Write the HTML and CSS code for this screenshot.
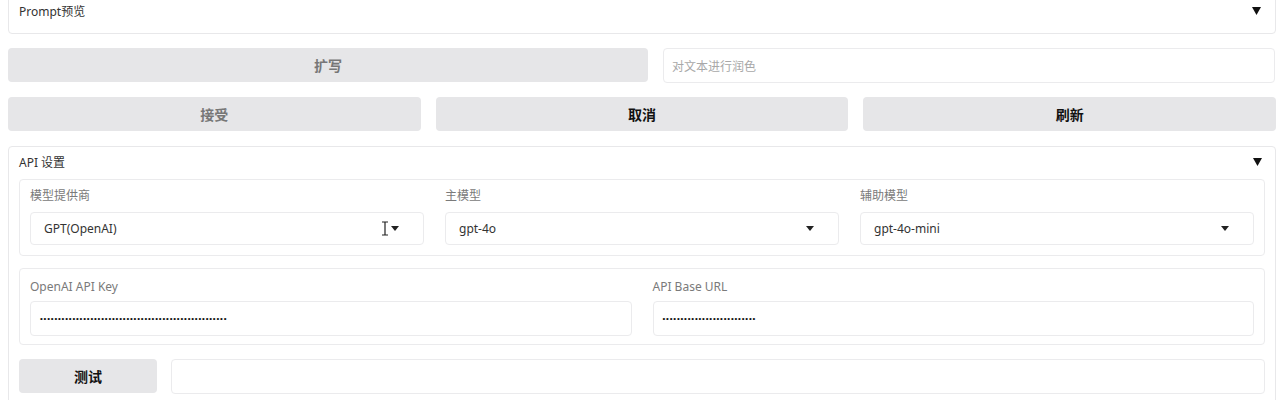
FILE: index.html
```html
<!DOCTYPE html>
<html lang="zh">
<head>
<meta charset="utf-8">
<title>Prompt</title>
<link rel="stylesheet" href="styles.css">
</head>
<body>
<div class="page">
  <div class="accordion top">
    <div class="acc-head">
      <span class="acc-title">Prompt预览</span>
      <svg class="caret" width="9" height="8" viewBox="0 0 9 8"><path d="M0 0H9L4.5 8Z" fill="#111"/></svg>
    </div>
  </div>

  <div class="row two">
    <button class="btn disabled">扩写</button>
    <div class="field"><span class="placeholder">对文本进行润色</span></div>
  </div>

  <div class="row three">
    <button class="btn disabled">接受</button>
    <button class="btn">取消</button>
    <button class="btn">刷新</button>
  </div>

  <div class="accordion api">
    <div class="acc-head">
      <span class="acc-title">API 设置</span>
      <svg class="caret" width="9" height="8" viewBox="0 0 9 8"><path d="M0 0H9L4.5 8Z" fill="#111"/></svg>
    </div>

    <div class="group models">
      <div class="col">
        <div class="label">模型提供商</div>
        <div class="select">
          <span>GPT(OpenAI)</span>
          <svg class="ibeam" width="8" height="15" viewBox="0 0 8 15"><path d="M1 1H7M4 1V14M1 14H7" stroke="#222" stroke-width="1.2" fill="none"/></svg>
          <svg class="arrow" width="8" height="5" viewBox="0 0 8 5"><path d="M0 0H8L4 5Z" fill="#222"/></svg>
        </div>
      </div>
      <div class="col">
        <div class="label">主模型</div>
        <div class="select">
          <span>gpt-4o</span>
          <svg class="arrow" width="8" height="5" viewBox="0 0 8 5"><path d="M0 0H8L4 5Z" fill="#222"/></svg>
        </div>
      </div>
      <div class="col">
        <div class="label">辅助模型</div>
        <div class="select">
          <span>gpt-4o-mini</span>
          <svg class="arrow" width="8" height="5" viewBox="0 0 8 5"><path d="M0 0H8L4 5Z" fill="#222"/></svg>
        </div>
      </div>
    </div>

    <div class="group keys">
      <div class="col">
        <div class="label">OpenAI API Key</div>
        <div class="input"><span class="dots">••••••••••••••••••••••••••••••••••••••••••••••••••••</span></div>
      </div>
      <div class="col">
        <div class="label">API Base URL</div>
        <div class="input"><span class="dots">••••••••••••••••••••••••••</span></div>
      </div>
    </div>

    <div class="row test">
      <button class="btn small">测试</button>
      <div class="field"></div>
    </div>
  </div>
</div>
</body>
</html>
```

FILE: styles.css
```css
* { box-sizing: border-box; }
html, body { margin: 0; padding: 0; background: #fff; overflow: hidden; }
body {
  font-family: "Noto Sans", "Noto Sans CJK SC", sans-serif;
  color: #333;
  font-size: 12px;
}
.page {
  padding: 0 4px 0 8px;
  margin-top: -6px;
  display: flex;
  flex-direction: column;
}
.accordion {
  border: 1px solid #e8e8ea;
  border-radius: 4px;
  background: #fff;
}
.accordion.top {
  height: 40px;
  padding: 9px 11px 0 10px;
}
.acc-head {
  display: flex;
  justify-content: space-between;
  align-items: center;
  height: 16px;
  line-height: 16px;
}
.acc-title { font-size: 12px; color: #333; }
.caret { margin-right: 3px; margin-top: -2px; }

.row { display: grid; }
.row.two {
  margin-top: 14px;
  grid-template-columns: 640px 1fr;
  gap: 15px;
  padding-right: 1px;
}
.row.three {
  margin-top: 14px;
  grid-template-columns: repeat(3, 1fr);
  gap: 15px;
}
.btn {
  height: 34px;
  border: none;
  border-radius: 4px;
  background: #e6e6e8;
  font-family: "Noto Sans CJK SC", "Noto Sans", sans-serif;
  font-size: 14px;
  font-weight: 700;
  color: #111;
  padding: 0;
}
.btn.disabled { color: #777; }
.field {
  height: 35px;
  border: 1px solid #ebebed;
  border-radius: 4px;
  background: #fff;
  display: flex;
  align-items: center;
  padding: 0 8px;
}
.placeholder { color: #a8a8a8; font-size: 12px; font-family: "Noto Sans CJK SC", sans-serif; }

.accordion.api {
  margin-top: 15px;
  padding: 8px 10px 10px 10px;
  height: 270px;
}
.group {
  margin-top: 8px;
  border: 1px solid #ebebed;
  border-radius: 4px;
  display: grid;
  column-gap: 21px;
  padding: 0 10px;
}
.group.models {
  grid-template-columns: repeat(3, 1fr);
  height: 77px;
  padding-top: 8px;
}
.group.keys {
  margin-top: 12px;
  grid-template-columns: 1fr 1fr;
  height: 77px;
  padding-top: 10px;
}
.col { display: flex; flex-direction: column; }
.label {
  font-size: 12px;
  line-height: 16px;
  color: #7a7a7a;
  font-family: "Noto Sans", "Noto Sans CJK SC", sans-serif;
}
.group.models .label { margin-bottom: 8px; }
.group.keys .label { margin-bottom: 6px; }
.select {
  position: relative;
  height: 33px;
  border: 1px solid #ebebed;
  border-radius: 4px;
  display: flex;
  align-items: center;
  padding: 0 24px 0 13px;
  color: #333;
}
.select span { flex: 1; }
.arrow { flex: none; }
.ibeam { position: absolute; right: 34px; top: 8px; }
.input {
  height: 35px;
  border: 1px solid #ebebed;
  border-radius: 4px;
  display: flex;
  align-items: center;
  padding: 0 9px;
}
.dots {
  font-family: "Liberation Sans", sans-serif;
  font-size: 8px;
  letter-spacing: 0.8px;
  color: #111;
}
.row.test {
  margin-top: 14px;
  grid-template-columns: 138px 1fr;
  gap: 14px;
}
.btn.small { height: 34px; }
```
